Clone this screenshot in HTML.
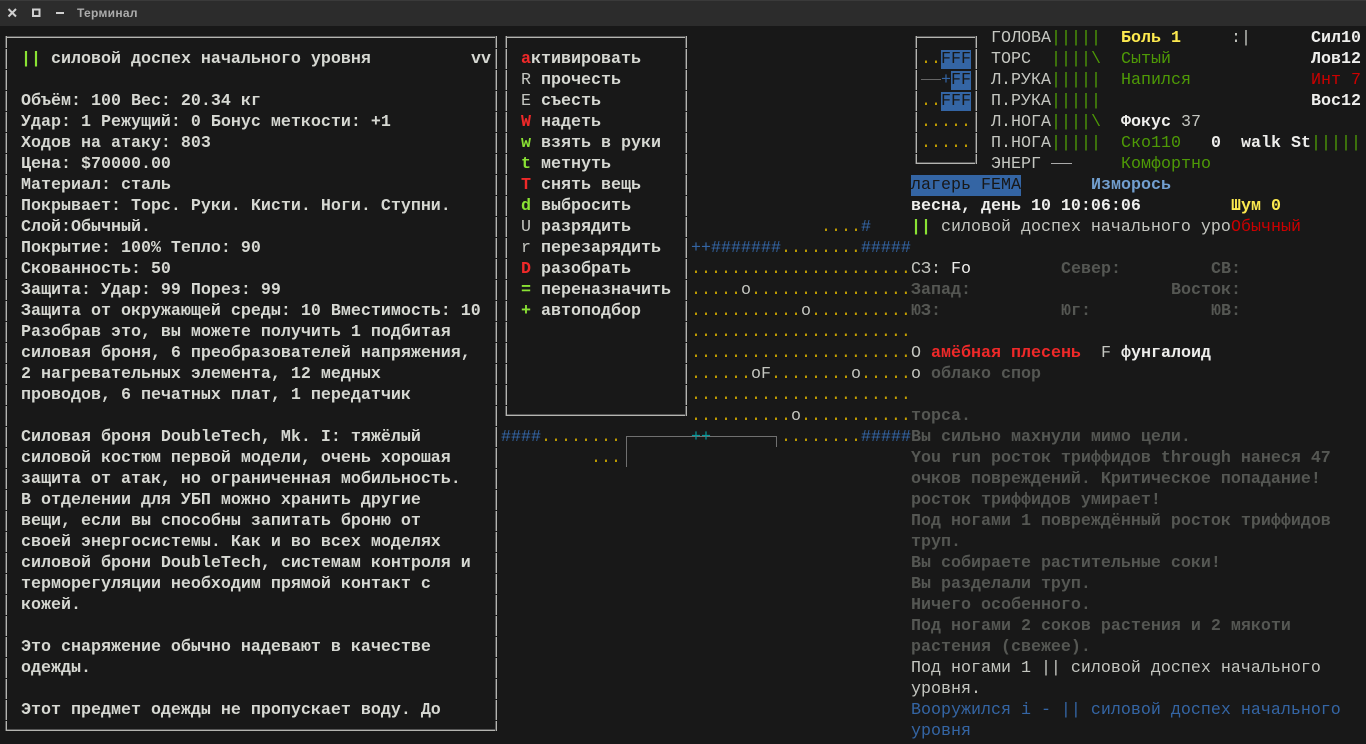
<!DOCTYPE html>
<html lang="ru"><head><meta charset="utf-8"><title>Терминал</title>
<style>
html,body{margin:0;padding:0;background:#181818;width:1366px;height:744px;overflow:hidden}
#bar{position:absolute;left:0;top:0;width:1366px;height:26px;background:#2c2c2c;border-top:1px solid #3a3a3a;box-sizing:border-box}
#title{position:absolute;left:77px;top:4px;font:bold 12px/16px "Liberation Sans",sans-serif;color:#acacac;letter-spacing:.3px}
.t{position:absolute;left:calc(1px + var(--c)*10px);top:calc(28px + var(--r)*21px);white-space:pre;font:16.667px/21px "Liberation Mono",monospace;color:#c4c6c0}
.b{font-weight:bold}
.w{color:#d6d8d2;font-weight:bold}
.W{color:#eeeeec;font-weight:bold}
.g{color:#4e9a06}.G{color:#8ae234;font-weight:bold}
.rd{color:#cc0000}.R{color:#ef2929;font-weight:bold}
.y{color:#c4a000}.Y{color:#fce94f;font-weight:bold}
.bl{color:#3465a4}.L{color:#729fcf;font-weight:bold}
.c{color:#06989a}
.d{color:#555753;font-weight:bold}
.hb{background:#3465a4;color:#181818}
.v,.h{position:absolute}
.v{width:2px;top:36px;background-image:linear-gradient(transparent 20px,#181818 20px),linear-gradient(90deg,#555 50%,#b4b4b0 50%);background-size:100% 21px,100% 100%;background-position:0 -8px,0 0;background-repeat:repeat-y,no-repeat}
.h{height:2px;background:linear-gradient(#555 50%,#b4b4b0 50%)}
.g1{position:absolute;background:#707070}
</style></head><body>
<div id="bar">
<svg width="72" height="25" style="position:absolute;left:0;top:0"><path d="M8.5 8L16 15.5M16 8L8.5 15.5" stroke="#d0d0d0" stroke-width="2"/><rect x="33" y="8.5" width="6.5" height="6.5" fill="none" stroke="#d0d0d0" stroke-width="2"/><path d="M56 12h8" stroke="#d0d0d0" stroke-width="2"/></svg>
<div id="title">Терминал</div></div>

<!-- left panel frame -->
<div class="h" style="left:5px;top:36px;width:492px"></div>
<div class="h" style="left:5px;top:729px;width:492px"></div>
<div class="v" style="left:5px;height:695px"></div>
<div class="v" style="left:495px;height:695px"></div>
<!-- menu frame -->
<div class="h" style="left:505px;top:36px;width:182px"></div>
<div class="h" style="left:505px;top:414px;width:182px"></div>
<div class="v" style="left:505px;height:380px"></div>
<div class="v" style="left:685px;height:380px"></div>
<!-- minimap frame -->
<div class="h" style="left:915px;top:36px;width:62px"></div>
<div class="h" style="left:915px;top:162px;width:62px"></div>
<div class="v" style="left:915px;height:128px"></div>
<div class="v" style="left:975px;height:128px"></div>
<!-- building on map -->
<div class="g1" style="left:626px;top:436px;width:151px;height:1px"></div>
<div class="g1" style="left:626px;top:436px;width:1px;height:31px"></div>
<div class="g1" style="left:776px;top:436px;width:1px;height:11px"></div>

<!-- left panel text -->
<div class="t G" style="--c:2;--r:1">||</div><div class="t w" style="--c:5;--r:1">силовой доспех начального уровня</div><div class="t w" style="--c:47;--r:1">vv</div>
<div class="t w" style="--c:2;--r:3">Объём: 100 Вес: 20.34 кг</div>
<div class="t w" style="--c:2;--r:4">Удар: 1 Режущий: 0 Бонус меткости: +1</div>
<div class="t w" style="--c:2;--r:5">Ходов на атаку: 803</div>
<div class="t w" style="--c:2;--r:6">Цена: $70000.00</div>
<div class="t w" style="--c:2;--r:7">Материал: сталь</div>
<div class="t w" style="--c:2;--r:8">Покрывает: Торс. Руки. Кисти. Ноги. Ступни.</div>
<div class="t w" style="--c:2;--r:9">Слой:Обычный.</div>
<div class="t w" style="--c:2;--r:10">Покрытие: 100% Тепло: 90</div>
<div class="t w" style="--c:2;--r:11">Скованность: 50</div>
<div class="t w" style="--c:2;--r:12">Защита: Удар: 99 Порез: 99</div>
<div class="t w" style="--c:2;--r:13">Защита от окружающей среды: 10 Вместимость: 10</div>
<div class="t w" style="--c:2;--r:14">Разобрав это, вы можете получить 1 подбитая</div>
<div class="t w" style="--c:2;--r:15">силовая броня, 6 преобразователей напряжения,</div>
<div class="t w" style="--c:2;--r:16">2 нагревательных элемента, 12 медных</div>
<div class="t w" style="--c:2;--r:17">проводов, 6 печатных плат, 1 передатчик</div>
<div class="t w" style="--c:2;--r:19">Силовая броня DoubleTech, Mk. I: тяжёлый</div>
<div class="t w" style="--c:2;--r:20">силовой костюм первой модели, очень хорошая</div>
<div class="t w" style="--c:2;--r:21">защита от атак, но ограниченная мобильность.</div>
<div class="t w" style="--c:2;--r:22">В отделении для УБП можно хранить другие</div>
<div class="t w" style="--c:2;--r:23">вещи, если вы способны запитать броню от</div>
<div class="t w" style="--c:2;--r:24">своей энергосистемы. Как и во всех моделях</div>
<div class="t w" style="--c:2;--r:25">силовой брони DoubleTech, системам контроля и</div>
<div class="t w" style="--c:2;--r:26">терморегуляции необходим прямой контакт с</div>
<div class="t w" style="--c:2;--r:27">кожей.</div>
<div class="t w" style="--c:2;--r:29">Это снаряжение обычно надевают в качестве</div>
<div class="t w" style="--c:2;--r:30">одежды.</div>
<div class="t w" style="--c:2;--r:32">Этот предмет одежды не пропускает воду. До</div>

<!-- menu -->
<div class="t R" style="--c:52;--r:1">а</div><div class="t w" style="--c:53;--r:1">ктивировать</div>
<div class="t" style="--c:52;--r:2">R</div><div class="t w" style="--c:54;--r:2">прочесть</div>
<div class="t" style="--c:52;--r:3">E</div><div class="t w" style="--c:54;--r:3">съесть</div>
<div class="t R" style="--c:52;--r:4">W</div><div class="t w" style="--c:54;--r:4">надеть</div>
<div class="t G" style="--c:52;--r:5">w</div><div class="t w" style="--c:54;--r:5">взять в руки</div>
<div class="t G" style="--c:52;--r:6">t</div><div class="t w" style="--c:54;--r:6">метнуть</div>
<div class="t R" style="--c:52;--r:7">T</div><div class="t w" style="--c:54;--r:7">снять вещь</div>
<div class="t G" style="--c:52;--r:8">d</div><div class="t w" style="--c:54;--r:8">выбросить</div>
<div class="t" style="--c:52;--r:9">U</div><div class="t w" style="--c:54;--r:9">разрядить</div>
<div class="t" style="--c:52;--r:10">r</div><div class="t w" style="--c:54;--r:10">перезарядить</div>
<div class="t R" style="--c:52;--r:11">D</div><div class="t w" style="--c:54;--r:11">разобрать</div>
<div class="t G" style="--c:52;--r:12">=</div><div class="t w" style="--c:54;--r:12">переназначить</div>
<div class="t G" style="--c:52;--r:13">+</div><div class="t w" style="--c:54;--r:13">автоподбор</div>

<!-- map -->
<div class="t y" style="--c:82;--r:9">....<span class="bl">#</span></div>
<div class="t bl" style="--c:69;--r:10">++#######<span class="y">........</span>#####</div>
<div class="t y" style="--c:69;--r:11">......................</div>
<div class="t y" style="--c:69;--r:12">.....<span style="color:#c4c6c0">o</span>................</div>
<div class="t y" style="--c:69;--r:13">...........<span style="color:#c4c6c0">o</span>..........</div>
<div class="t y" style="--c:69;--r:14">......................</div>
<div class="t y" style="--c:69;--r:15">......................</div>
<div class="t y" style="--c:69;--r:16">......<span style="color:#c4c6c0">oF</span>........<span style="color:#c4c6c0">o</span>.....</div>
<div class="t y" style="--c:69;--r:17">......................</div>
<div class="t y" style="--c:69;--r:18">..........<span style="color:#c4c6c0">o</span>...........</div>
<div class="t bl" style="--c:50;--r:19">####<span class="y">........</span></div>
<div class="t c" style="--c:69;--r:19">++</div>
<div class="t bl" style="--c:78;--r:19"><span class="y">........</span>#####</div>
<div class="t y" style="--c:59;--r:20">...</div>

<!-- minimap -->
<div class="t y" style="--c:92;--r:1">..<span class="hb">FFF</span></div>
<div class="g1" style="left:921px;top:79px;width:20px;height:1px;background:#666"></div>
<div class="t bl" style="--c:94;--r:2">+<span class="hb">FF</span></div>
<div class="t y" style="--c:92;--r:3">..<span class="hb">FFF</span></div>
<div class="t y" style="--c:92;--r:4">.....</div>
<div class="t y" style="--c:92;--r:5">.....</div>

<!-- body status -->
<div class="t" style="--c:99;--r:0">ГОЛОВА<span class="g">|||||</span></div>
<div class="t" style="--c:99;--r:1">ТОРС  <span class="g">||||\</span></div>
<div class="t" style="--c:99;--r:2">Л.РУКА<span class="g">|||||</span></div>
<div class="t" style="--c:99;--r:3">П.РУКА<span class="g">|||||</span></div>
<div class="t" style="--c:99;--r:4">Л.НОГА<span class="g">||||\</span></div>
<div class="t" style="--c:99;--r:5">П.НОГА<span class="g">|||||</span></div>
<div class="t" style="--c:99;--r:6">ЭНЕРГ</div>
<div class="g1" style="left:1051px;top:163px;width:21px;height:1px;background:#aaa"></div>

<div class="t Y" style="--c:112;--r:0">Боль 1</div>
<div class="t" style="--c:123;--r:0">:|</div>
<div class="t g" style="--c:112;--r:1">Сытый</div>
<div class="t g" style="--c:112;--r:2">Напился</div>
<div class="t W" style="--c:112;--r:4">Фокус <span style="font-weight:normal;color:#c4c6c0">37</span></div>
<div class="t g" style="--c:112;--r:5">Ско110</div>
<div class="t W" style="--c:121;--r:5">0</div>
<div class="t W" style="--c:124;--r:5">walk St</div>
<div class="t g" style="--c:131;--r:5">|||||</div>
<div class="t g" style="--c:112;--r:6">Комфортно</div>

<div class="t W" style="--c:131;--r:0">Сил10</div>
<div class="t W" style="--c:131;--r:1">Лов12</div>
<div class="t rd" style="--c:131;--r:2">Инт 7</div>
<div class="t W" style="--c:131;--r:3">Вос12</div>

<div class="t hb" style="--c:91;--r:7">лагерь FEMA</div>
<div class="t L" style="--c:109;--r:7">Изморось</div>
<div class="t W" style="--c:91;--r:8">весна, день 10 10:06:06</div>
<div class="t Y" style="--c:123;--r:8">Шум 0</div>
<div class="t G" style="--c:91;--r:9">||</div>
<div class="t" style="--c:94;--r:9">силовой доспех начального уро</div>
<div class="t rd" style="--c:123;--r:9">Обычный</div>

<!-- compass -->
<div class="t" style="--c:91;--r:11">СЗ: <span style="color:#eeeeec">Fo</span></div>
<div class="t d" style="--c:106;--r:11">Север:</div>
<div class="t d" style="--c:121;--r:11">СВ:</div>
<div class="t d" style="--c:91;--r:12">Запад:</div>
<div class="t d" style="--c:117;--r:12">Восток:</div>
<div class="t d" style="--c:91;--r:13">ЮЗ:</div>
<div class="t d" style="--c:106;--r:13">Юг:</div>
<div class="t d" style="--c:121;--r:13">ЮВ:</div>

<div class="t" style="--c:91;--r:15">O</div>
<div class="t R" style="--c:93;--r:15">амёбная плесень</div>
<div class="t" style="--c:110;--r:15">F</div>
<div class="t W" style="--c:112;--r:15">фунгалоид</div>
<div class="t" style="--c:91;--r:16">o</div>
<div class="t d" style="--c:93;--r:16">облако спор</div>

<!-- log -->
<div class="t d" style="--c:91;--r:18">торса.</div>
<div class="t d" style="--c:91;--r:19">Вы сильно махнули мимо цели.</div>
<div class="t d" style="--c:91;--r:20">You run росток триффидов through нанеся 47</div>
<div class="t d" style="--c:91;--r:21">очков повреждений. Критическое попадание!</div>
<div class="t d" style="--c:91;--r:22">росток триффидов умирает!</div>
<div class="t d" style="--c:91;--r:23">Под ногами 1 повреждённый росток триффидов</div>
<div class="t d" style="--c:91;--r:24">труп.</div>
<div class="t d" style="--c:91;--r:25">Вы собираете растительные соки!</div>
<div class="t d" style="--c:91;--r:26">Вы разделали труп.</div>
<div class="t d" style="--c:91;--r:27">Ничего особенного.</div>
<div class="t d" style="--c:91;--r:28">Под ногами 2 соков растения и 2 мякоти</div>
<div class="t d" style="--c:91;--r:29">растения (свежее).</div>
<div class="t" style="--c:91;--r:30">Под ногами 1 || силовой доспех начального</div>
<div class="t" style="--c:91;--r:31">уровня.</div>
<div class="t bl" style="--c:91;--r:32">Вооружился i - || силовой доспех начального</div>
<div class="t bl" style="--c:91;--r:33">уровня</div>
</body></html>
